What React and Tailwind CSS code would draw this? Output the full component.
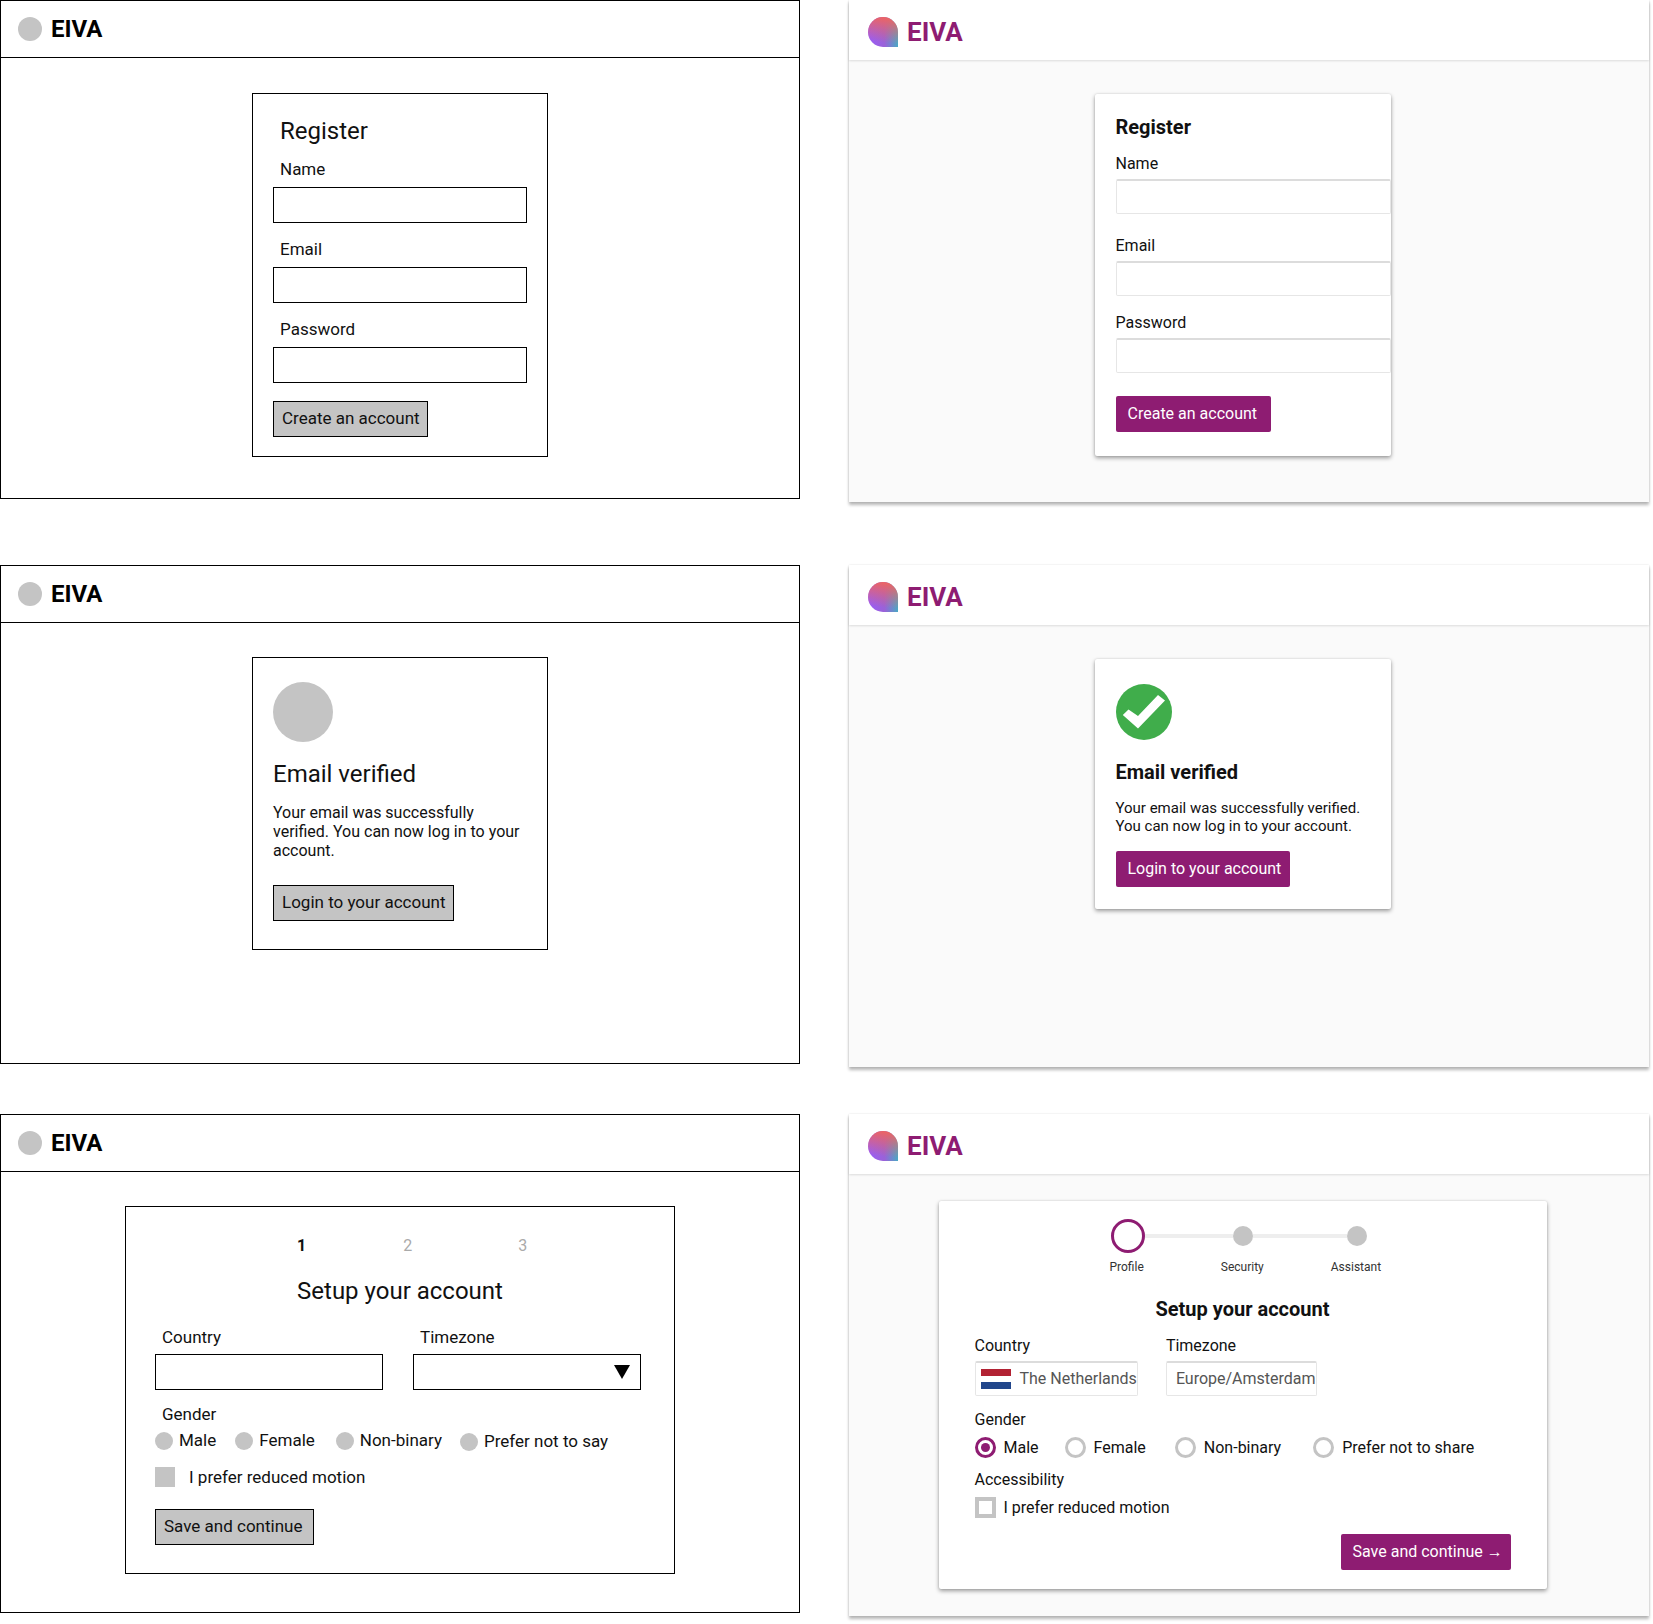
const PURPLE = 'bg-[#8e1c72]';

function WireFrame({ children, pt = 'pt-[34px]' }) {
  return (
    <div className="h-[499px] w-[800px] border border-black bg-white">
      <div className="flex h-[57px] items-center gap-[9px] border-b border-black pl-[17px]">
        <span className="h-6 w-6 rounded-full bg-[#c4c4c4]"></span>
        <span className="text-2xl leading-7 font-bold text-black">EIVA</span>
      </div>
      <div className={`flex justify-center ${pt}`}>{children}</div>
    </div>
  );
}

function Logo() {
  return (
    <svg width="30" height="30" viewBox="0 0 30 30">
      <defs>
        <linearGradient id="logoBase" x1="0" y1="0" x2="1" y2="0">
          <stop offset="0" stopColor="#9b5cf6" />
          <stop offset="0.55" stopColor="#9a62d8" />
          <stop offset="1" stopColor="#4aa8c4" />
        </linearGradient>
        <linearGradient id="logoTop" x1="0.6" y1="0" x2="0.5" y2="0.85">
          <stop offset="0" stopColor="#ee6461" />
          <stop offset="1" stopColor="#ee6461" stopOpacity="0" />
        </linearGradient>
      </defs>
      <path d="M15 0a15 15 0 0 1 15 15v15H15A15 15 0 0 1 15 0z" fill="url(#logoBase)" />
      <path d="M15 0a15 15 0 0 1 15 15v15H15A15 15 0 0 1 15 0z" fill="url(#logoTop)" />
    </svg>
  );
}

function DesignFrame({ children, pt = 'pt-[34px]' }) {
  return (
    <div className="h-[502px] w-[800px] bg-[#fafafa] shadow-[0_0_2px_rgba(0,0,0,0.1),0_3px_3px_rgba(0,0,0,0.28)]">
      <div className="flex h-[60px] items-center gap-[9px] bg-white pt-1 pl-[19px] shadow-[0_1px_2px_rgba(0,0,0,0.12)]">
        <Logo />
        <span className="text-[26px] leading-8 font-bold text-[#8e1c72]">EIVA</span>
      </div>
      <div className={`flex justify-center pr-[13px] ${pt}`}>{children}</div>
    </div>
  );
}

function WireInput({ className = 'w-[253px]', children }) {
  return <div className={`relative h-9 border border-black bg-white ${className}`}>{children}</div>;
}

function WireLabel({ className = '', children }) {
  return <div className={`ml-[7px] text-[17px] leading-[19px] text-[#111] ${className}`}>{children}</div>;
}

function WireButton({ children, className = '' }) {
  return (
    <button className={`flex h-9 items-center border border-black bg-[#c4c4c4] pl-2 text-[17px] text-[#111] ${className}`}>
      {children}
    </button>
  );
}

function DesignInput({ children, className = 'w-[254px]' }) {
  return (
    <div className={`flex h-[35px] items-center rounded-[2px] border border-[#e6e6e6] border-t-2 border-t-[#dcdcdc] bg-white text-base text-[#555] ${className}`}>
      {children}
    </div>
  );
}

function DesignButton({ children, className = '' }) {
  return (
    <button className={`flex h-9 items-center rounded-[2px] ${PURPLE} pl-3 text-base text-white ${className}`}>
      {children}
    </button>
  );
}

function DesignCard({ className, children }) {
  return (
    <div className={`rounded-[2px] bg-white shadow-[0_0_2px_rgba(0,0,0,0.12),0_2px_4px_rgba(0,0,0,0.38)] ${className}`}>
      {children}
    </div>
  );
}

function WireRegister() {
  return (
    <div className="h-[364px] w-[296px] border border-black pt-[23px] pl-5">
      <h1 className="ml-[7px] text-2xl leading-7 text-[#111]">Register</h1>
      <WireLabel className="mt-[15px]">Name</WireLabel>
      <WireInput className="mt-2 w-[254px]" />
      <WireLabel className="mt-[17px]">Email</WireLabel>
      <WireInput className="mt-2 w-[254px]" />
      <WireLabel className="mt-[17px]">Password</WireLabel>
      <WireInput className="mt-2 w-[254px]" />
      <WireButton className="mt-[18px] w-[155px]">Create an account</WireButton>
    </div>
  );
}

function DesignRegister() {
  return (
    <DesignCard className="h-[362px] w-[296px] pt-[20px] pl-[21px]">
      <h1 className="text-xl leading-[26px] font-bold text-[#111]">Register</h1>
      <div className="mt-[14px] text-base leading-[19px] text-[#111]">Name</div>
      <DesignInput className="mt-[6px]" />
      <div className="mt-[22px] text-base leading-[19px] text-[#111]">Email</div>
      <DesignInput className="mt-[6px]" />
      <div className="mt-[17px] text-base leading-[19px] text-[#111]">Password</div>
      <DesignInput className="mt-[6px]" />
      <DesignButton className="mt-[23px] w-[155px]">Create an account</DesignButton>
    </DesignCard>
  );
}

function WireVerified() {
  return (
    <div className="h-[293px] w-[296px] border border-black pt-6 pl-5">
      <div className="h-[60px] w-[60px] rounded-full bg-[#c4c4c4]"></div>
      <h1 className="mt-[18px] text-2xl leading-7 text-[#111]">Email verified</h1>
      <p className="mt-[15px] w-[254px] text-base leading-[19px] text-[#111]">
        Your email was successfully verified. You can now log in to your account.
      </p>
      <WireButton className="mt-[25px] w-[181px]">Login to your account</WireButton>
    </div>
  );
}

function DesignVerified() {
  return (
    <DesignCard className="h-[250px] w-[296px] pt-[25px] pl-[21px]">
      <svg width="56" height="56" viewBox="0 0 56 56" className="block">
        <circle cx="28" cy="28" r="28" fill="#40ad4b" />
        <path d="M6.8 31 L12.5 25.5 L22 32 L42 11 L49 16.5 L22 44.5 Z" fill="#fff" />
      </svg>
      <h1 className="mt-[19px] text-xl leading-[26px] font-bold text-[#111]">Email verified</h1>
      <p className="mt-[14px] text-[15px] leading-[18px] text-[#111]">
        Your email was successfully verified.
        <br />
        You can now log in to your account.
      </p>
      <DesignButton className="mt-4 w-[174px]">Login to your account</DesignButton>
    </DesignCard>
  );
}

function WireRadio({ className = '', children }) {
  return (
    <div className={`flex items-center gap-[6px] ${className}`}>
      <span className="h-[18px] w-[18px] rounded-full bg-[#c4c4c4]"></span>
      <span className="text-[17px] leading-[19px] text-[#111]">{children}</span>
    </div>
  );
}

function WireSetup() {
  return (
    <div className="h-[368px] w-[550px] border border-black pt-[29px] pl-[29px]">
      <div className="flex text-base leading-[19px] text-[#aaa]">
        <span className="ml-[142px] font-bold text-[#111]">1</span>
        <span className="ml-[97px]">2</span>
        <span className="ml-[106px]">3</span>
      </div>
      <h1 className="mt-[22px] mr-[29px] text-center text-2xl leading-7 text-[#111]">Setup your account</h1>
      <div className="mt-[23px] flex gap-[30px]">
        <div>
          <WireLabel>Country</WireLabel>
          <WireInput className="mt-[7px] w-[228px]" />
        </div>
        <div>
          <WireLabel>Timezone</WireLabel>
          <WireInput className="mt-[7px] w-[228px]">
            <svg width="16" height="14" viewBox="0 0 16 14" className="absolute top-[10px] right-[10px]">
              <path d="M0 0h16L8 14z" fill="#000" />
            </svg>
          </WireInput>
        </div>
      </div>
      <WireLabel className="mt-[15px]">Gender</WireLabel>
      <div className="mt-[6px] flex items-center">
        <WireRadio>Male</WireRadio>
        <WireRadio className="ml-[19px]">Female</WireRadio>
        <WireRadio className="ml-[21px]">Non-binary</WireRadio>
        <WireRadio className="mt-[2px] ml-[18px]">Prefer not to say</WireRadio>
      </div>
      <div className="mt-[16px] flex items-center gap-[14px]">
        <span className="h-5 w-5 bg-[#c4c4c4]"></span>
        <span className="text-[17px] leading-[19px] text-[#111]">I prefer reduced motion</span>
      </div>
      <WireButton className="mt-[22px] w-[159px]">Save and continue</WireButton>
    </div>
  );
}

function DesignRadio({ selected, className = '', children }) {
  return (
    <div className={`flex items-center gap-2 ${className}`}>
      <span className={`flex h-[21px] w-[21px] items-center justify-center rounded-full border-[3px] ${selected ? 'border-[#8e1c72]' : 'border-[#c4c4c4]'} bg-white`}>
        {selected && <span className="h-[9px] w-[9px] rounded-full bg-[#8e1c72]"></span>}
      </span>
      <span className="text-base leading-[19px] text-[#111]">{children}</span>
    </div>
  );
}

function Stepper() {
  return (
    <div className="ml-[136px] flex items-center">
      <span className="h-[34px] w-[34px] rounded-full border-[3px] border-[#8e1c72] bg-white"></span>
      <span className="h-1 w-[88px] bg-[#eeeeee]"></span>
      <span className="h-5 w-5 rounded-full bg-[#c4c4c4]"></span>
      <span className="h-1 w-[94px] bg-[#eeeeee]"></span>
      <span className="h-5 w-5 rounded-full bg-[#c4c4c4]"></span>
    </div>
  );
}

function DesignSetup() {
  return (
    <DesignCard className="h-[388px] w-[608px] pt-[18px] pr-[36px] pl-[36px]">
      <Stepper />
      <div className="mt-[6px] flex text-xs leading-[16px] text-[#333]">
        <span className="ml-[135px]">Profile</span>
        <span className="ml-[77px]">Security</span>
        <span className="ml-[67px]">Assistant</span>
      </div>
      <h1 className="mt-[21px] text-center text-xl leading-[26px] font-bold text-[#111]">Setup your account</h1>
      <div className="mt-[14px] flex gap-[28px]">
        <div>
          <div className="text-base leading-[19px] text-[#111]">Country</div>
          <DesignInput className="mt-[6px] pl-[4px]">
            <svg width="30" height="20" viewBox="0 0 30 20" className="mr-[9px] ml-[1px]">
              <rect width="30" height="7" fill="#b22233" />
              <rect y="7" width="30" height="6" fill="#fff" />
              <rect y="13" width="30" height="7" fill="#21468b" />
            </svg>
            The Netherlands
          </DesignInput>
        </div>
        <div>
          <div className="text-base leading-[19px] text-[#111]">Timezone</div>
          <DesignInput className="mt-[6px] pl-[9px]">Europe/Amsterdam</DesignInput>
        </div>
      </div>
      <div className="mt-[14px] text-base leading-[19px] text-[#111]">Gender</div>
      <div className="mt-2 flex items-center">
        <DesignRadio selected>Male</DesignRadio>
        <DesignRadio className="ml-[26px]">Female</DesignRadio>
        <DesignRadio className="ml-[29px]">Non-binary</DesignRadio>
        <DesignRadio className="ml-[32px]">Prefer not to share</DesignRadio>
      </div>
      <div className="mt-3 text-base leading-[19px] text-[#111]">Accessibility</div>
      <div className="mt-2 flex items-center gap-2">
        <span className="h-[21px] w-[21px] border-4 border-[#c4c4c4] bg-white"></span>
        <span className="text-base leading-[19px] text-[#111]">I prefer reduced motion</span>
      </div>
      <div className="mt-4 flex justify-end">
        <DesignButton className="w-[170px]">Save and continue →</DesignButton>
      </div>
    </DesignCard>
  );
}

export default function App() {
  return (
    <div className="grid h-[1624px] w-[1653px] grid-cols-[800px_800px] grid-rows-[565px_549px_510px] gap-x-[49px] overflow-hidden bg-white font-['Roboto',sans-serif]">
      <WireFrame pt="pt-[35px]"><WireRegister /></WireFrame>
      <DesignFrame><DesignRegister /></DesignFrame>
      <WireFrame><WireVerified /></WireFrame>
      <DesignFrame><DesignVerified /></DesignFrame>
      <WireFrame><WireSetup /></WireFrame>
      <DesignFrame pt="pt-[27px]"><DesignSetup /></DesignFrame>
    </div>
  );
}
